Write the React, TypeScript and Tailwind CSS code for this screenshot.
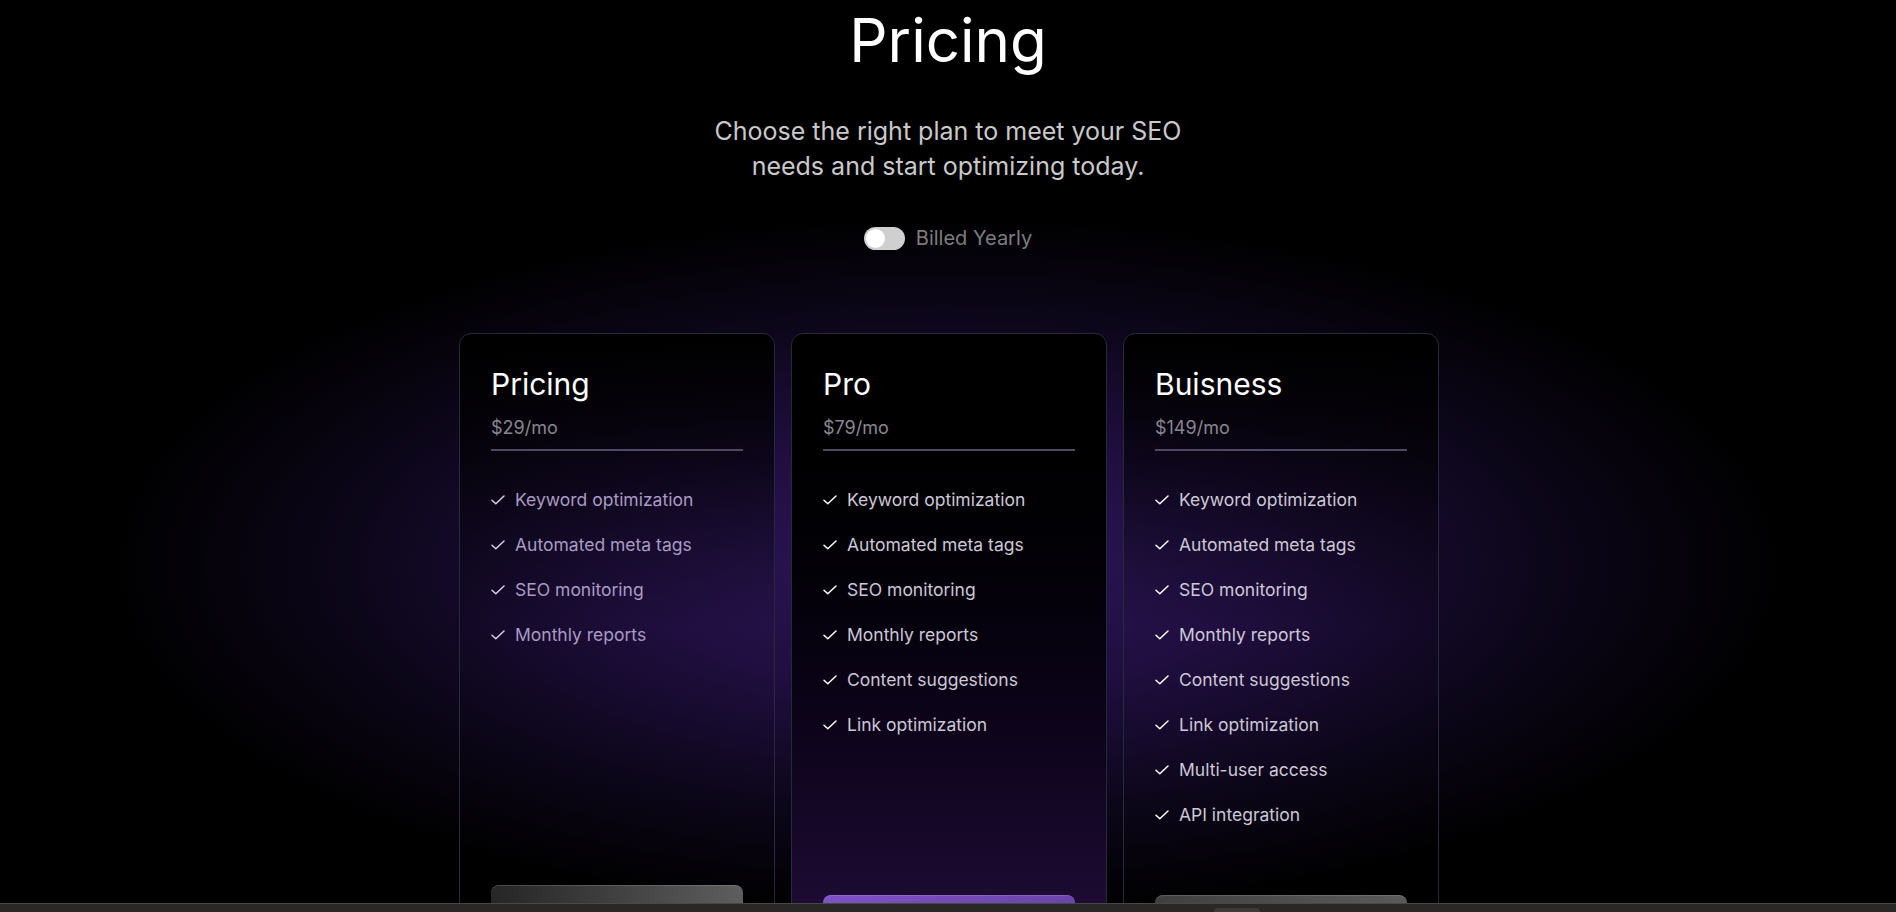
import { useState } from "react";

const plans = [
  {
    name: "Pricing",
    price: "$29/mo",
    features: ["Keyword optimization", "Automated meta tags", "SEO monitoring", "Monthly reports"],
    card: "bg-gradient-to-b from-black via-black/0 via-45% to-transparent",
    text: "text-[#a99bc2]",
    check: "text-[#d9d2e6]",
    button: "-translate-y-2.5 bg-gradient-to-r from-[#262626] to-[#5e5e5e] text-white",
  },
  {
    name: "Pro",
    price: "$79/mo",
    features: [
      "Keyword optimization",
      "Automated meta tags",
      "SEO monitoring",
      "Monthly reports",
      "Content suggestions",
      "Link optimization",
    ],
    card: "bg-gradient-to-b from-black to-[#25103f]",
    text: "text-[#cdc7d6]",
    check: "text-white",
    button: "bg-gradient-to-r from-[#7c52c6] to-[#6a45ab] text-white",
  },
  {
    name: "Buisness",
    price: "$149/mo",
    features: [
      "Keyword optimization",
      "Automated meta tags",
      "SEO monitoring",
      "Monthly reports",
      "Content suggestions",
      "Link optimization",
      "Multi-user access",
      "API integration",
    ],
    card: "bg-gradient-to-b from-black via-black/0 via-45% to-transparent",
    text: "text-[#cdc7d6]",
    check: "text-white",
    button: "bg-gradient-to-r from-[#404040] to-[#5a5a5a] text-white",
  },
];

function Check({ className }: { className: string }) {
  return (
    <svg width="14" height="10" viewBox="0 0 14 10" fill="none" className={`shrink-0 ${className}`}>
      <path d="M1 5.2 L4.8 8.8 L13 1" stroke="currentColor" strokeWidth="1.5" strokeLinecap="round" strokeLinejoin="round" />
    </svg>
  );
}

export default function App() {
  const [yearly, setYearly] = useState(false);

  return (
    <div
      className="relative h-screen overflow-hidden bg-black bg-[radial-gradient(ellipse_840px_350px_at_50%_62%,#2e175b_0%,#1f0e3e_38%,#0c0619_72%,#000_100%)] font-['Inter','Noto_Sans',sans-serif] text-white"
    >
      <div className="flex flex-col items-center pt-[10px]">
        <h1 className="text-6xl leading-none">Pricing</h1>

        <p className="mt-[44px] max-w-lg text-center text-[25px] leading-[35px] text-[#c9c9c9]">
          Choose the right plan to meet your SEO needs and start optimizing today.
        </p>

        <div className="mt-[40px] flex items-center gap-[11px]">
          <button
            onClick={() => setYearly(!yearly)}
            className="flex h-[23px] w-[41px] items-center rounded-full bg-[#cfcfcf] px-[2px]"
          >
            <span className={`h-[19px] w-[19px] rounded-full bg-white ${yearly ? "translate-x-[18px]" : ""}`} />
          </button>
          <span className="text-xl text-[#7d7d7d]">Billed Yearly</span>
        </div>

        {/* cards */}
        <div className="mt-[81px] ml-[2px] grid w-[980px] grid-cols-3 gap-4">
          {plans.map(p => (
            <div key={p.name} className={`flex flex-col rounded-xl border border-[#262a3a] px-[31px] pt-[32px] pb-[30px] ${p.card}`}>
              <h2 className="text-3xl text-white">{p.name}</h2>
              <p className="mt-3 text-lg text-[#8a8690]">{p.price}</p>
              <div className="mt-[7px] h-0.5 bg-[#4f4962]" />

              <ul className={`mt-[35px] flex flex-1 flex-col gap-[17px] text-[17.5px] leading-[28px] ${p.text}`}>
                {p.features.map(f => (
                  <li key={f} className="flex items-center gap-[10px]">
                    <Check className={p.check} />
                    {f}
                  </li>
                ))}
              </ul>

              <button className={`mt-[66px] h-16 rounded-lg text-base shadow-[inset_0_1px_0_rgba(255,255,255,0.15)] ${p.button}`}>
                Get Started
              </button>
            </div>
          ))}
        </div>
      </div>

      {/* bottom bar */}
      <div className="absolute inset-x-0 bottom-0 h-[9px] border-t border-[#4a4846] bg-[#2a2826]">
        <div className="absolute bottom-0 left-[1214px] h-[4px] w-[46px] rounded-t-md bg-[#3d3b39]" />
      </div>
    </div>
  );
}
